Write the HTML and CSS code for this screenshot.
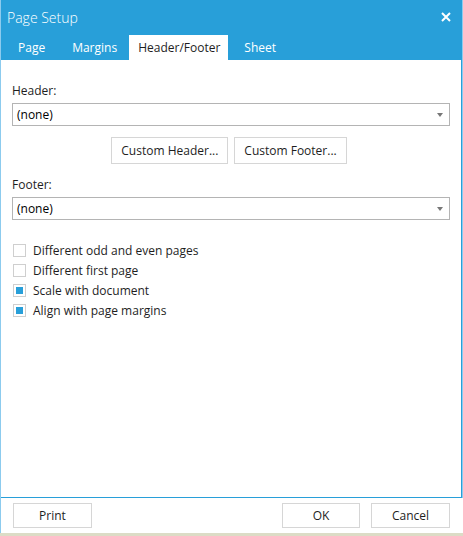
FILE: index.html
```html
<!DOCTYPE html>
<html>
<head>
<meta charset="utf-8">
<link rel="stylesheet" href="styles.css">
</head>
<body>
<div class="dialog">
  <div class="titlebar">
    <span class="title">Page Setup</span>
    <svg class="close" width="10" height="10" viewBox="0 0 10 10"><path d="M1 1L9 9M9 1L1 9" stroke="#fff" stroke-width="2"/></svg>
  </div>
  <div class="tabs">
    <span class="tab t1">Page</span>
    <span class="tab t2">Margins</span>
    <span class="tab active">Header/Footer</span>
    <span class="tab t4">Sheet</span>
  </div>
  <div class="panel">
    <div class="label">Header:</div>
    <div class="select"><span>(none)</span><span class="arrow"></span></div>
    <div class="custom-row">
      <button class="btn custom">Custom Header...</button>
      <button class="btn custom">Custom Footer...</button>
    </div>
    <div class="label">Footer:</div>
    <div class="select"><span>(none)</span><span class="arrow"></span></div>
    <div class="checks">
      <div class="check"><span class="box"></span>Different odd and even pages</div>
      <div class="check"><span class="box"></span>Different first page</div>
      <div class="check"><span class="box checked"></span>Scale with document</div>
      <div class="check"><span class="box checked"></span>Align with page margins</div>
    </div>
  </div>
  <div class="footer">
    <button class="btn foot">Print</button>
    <div class="spacer"></div>
    <button class="btn foot">OK</button>
    <button class="btn foot">Cancel</button>
  </div>
</div>
<div class="strip"></div>
</body>
</html>
```
FILE: styles.css
```css
html, body {
  margin: 0;
  padding: 0;
  background: #fff;
}
body {
  width: 463px;
  height: 536px;
  overflow: hidden;
  font-family: "Open Sans", "Noto Sans", sans-serif;
  font-size: 12px;
  color: #1e1e1e;
}
.dialog {
  box-sizing: border-box;
  width: 463px;
  height: 533px;
  background: #289fd9;
  border-left: 1px solid #8ccbee;
  border-right: 1px solid #8ccbee;
  display: flex;
  flex-direction: column;
}
.titlebar {
  height: 35px;
  display: flex;
  align-items: center;
  padding: 0 10px 1px 6px;
  box-sizing: border-box;
}
.title {
  color: #fff;
  font-size: 14px;
  font-weight: 300;
  flex: 1;
}
.close {
  margin-right: 1px;
}
.tabs {
  height: 25px;
  display: flex;
  align-items: stretch;
  padding-left: 8px;
}
.tab {
  color: #fff;
  font-size: 12px;
  display: flex;
  align-items: center;
}
.t1 { padding: 0 13px 0 9px; }
.t2 { padding: 0 12px 0 14px; }
.tab.active {
  background: #fff;
  color: #1e1e1e;
  padding: 0 8px 0 9px;
}
.t4 { padding: 0 0 0 16px; }
.panel {
  flex: 1;
  background: #fff;
  margin-right: 1px;
  border-bottom: 1px solid #289fd9;
  padding: 21px 11px 0 11px;
}
.label {
  height: 19px;
  line-height: 19px;
  margin-bottom: 3px;
}
.select {
  box-sizing: border-box;
  height: 23px;
  border: 1px solid #b4b4b4;
  display: flex;
  align-items: center;
  justify-content: space-between;
  padding: 0 6px 0 4px;
  color: #000;
}
.arrow {
  width: 0;
  height: 0;
  border-left: 3.5px solid transparent;
  border-right: 3.5px solid transparent;
  border-top: 4px solid #777;
  margin-top: 1px;
}
.custom-row {
  display: flex;
  justify-content: center;
  gap: 6px;
  margin: 11px 0 11px 0;
  padding-right: 4px;
}
.btn {
  font-family: inherit;
  font-size: 12px;
  color: #1e1e1e;
  background: #fff;
  border: 1px solid #d6d6d6;
  box-sizing: border-box;
  padding: 0;
  margin: 0;
}
.custom {
  height: 27px;
  padding: 0 9px;
}
.checks {
  margin-top: 20px;
  display: flex;
  flex-direction: column;
}
.check {
  height: 20px;
  display: flex;
  align-items: center;
}
.box {
  box-sizing: border-box;
  width: 13px;
  height: 13px;
  border: 1px solid #cfcfcf;
  margin: 0 7px 0 1px;
  display: flex;
  align-items: center;
  justify-content: center;
}
.box.checked::after {
  content: "";
  width: 7px;
  height: 7px;
  background: #289fd9;
}
.footer {
  height: 35px;
  background: #fff;
  margin-right: -1px;
  display: flex;
  align-items: center;
  padding: 0 13px 0 12px;
  gap: 11px;
}
.spacer { flex: 1; }
.foot {
  height: 25px;
  width: 79px;
}
.foot:nth-child(3) { width: 78px; }
.strip {
  height: 3px;
  background: #dcdcc6;
}
```
